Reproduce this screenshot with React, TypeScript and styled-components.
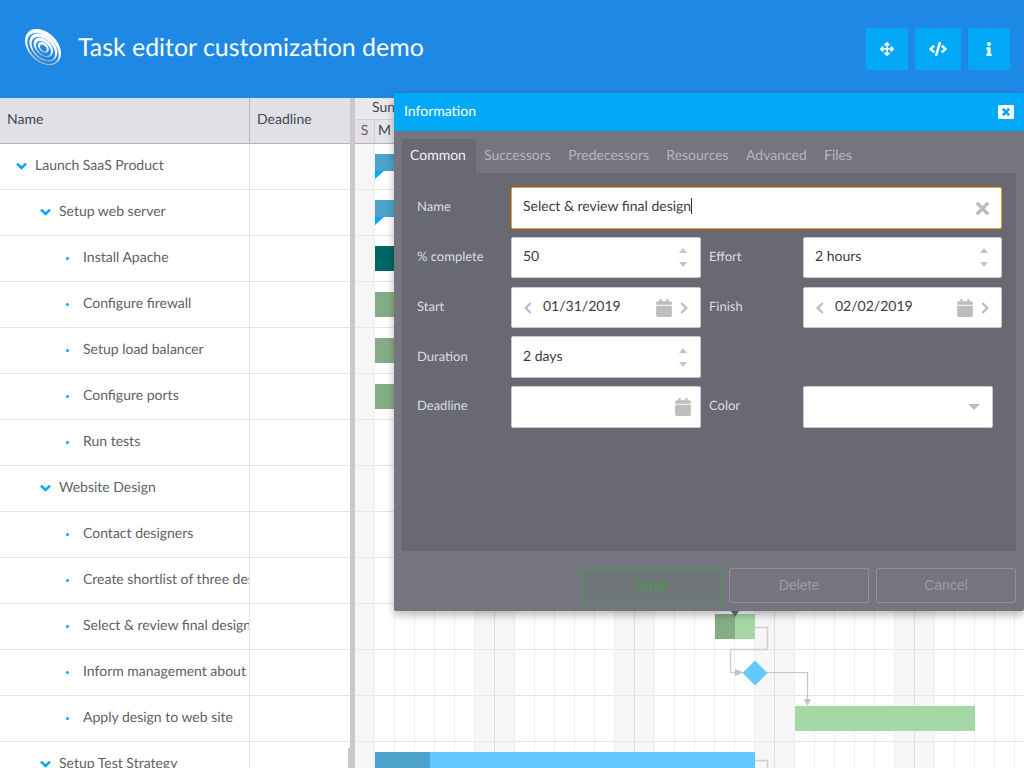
import React from "react";
import styled, { createGlobalStyle } from "styled-components";
import { FaArrowsAlt, FaCode, FaInfo, FaWindowClose, FaTimes, FaCalendar } from "react-icons/fa";

const Global = createGlobalStyle`
  html, body { margin: 0; padding: 0; width: 1024px; height: 768px; overflow: hidden; background: #fff; }
  * { box-sizing: border-box; }
  body { font-family: Lato, "Liberation Sans", sans-serif; text-rendering: geometricPrecision; }
`;

const Page = styled.div`position: relative; width: 1024px; height: 768px; overflow: hidden;`;
const Header = styled.header`
  height: 98px; background: #1e88e5; display: flex; align-items: center; padding: 0 14px 0 24px;
`;
const LogoSvg = styled.svg`flex: none; margin-bottom: 4px;`;
const Title = styled.h1`margin: 0 0 5px 16px; flex: 1; font-size: 24.9px; font-weight: 400; color: #fff;`;
const HeadBtn = styled.button<{ $w: number; $size?: number }>`
  width: ${p => p.$w}px; height: 42px; margin-left: 7px; border: 0; border-radius: 2px; background: #03a9f6; color: #fff;
  display: flex; align-items: center; justify-content: center; font-size: ${p => p.$size ?? 14}px; padding: 0;
`;
const Main = styled.div`display: flex; height: 670px;`;
const Tree = styled.div`width: 350px; flex: none;`;
const TreeHead = styled.div`
  display: grid; grid-template-columns: 250px 100px; height: 46px; background: #e0e1e6; border-bottom: 1px solid #b4b4ba;
  color: #45454d; font-size: 14px;
`;
const HeadCell = styled.div`
  display: flex; align-items: center; padding: 0 7px 5px;
  &:first-child { border-right: 1px solid #b4b4ba; }
`;
const Row = styled.div`display: grid; grid-template-columns: 250px 100px; height: 46px; border-bottom: 1px solid #e3e3e7;`;
const NameCell = styled.div<{ $level: number }>`
  border-right: 1px solid #e3e3e7; overflow: hidden; white-space: nowrap; display: flex; align-items: center;
  color: #606067; font-size: 14px; padding-bottom: 5px; padding-left: ${p => [16, 40, 66][p.$level]}px;
`;
const ChevronBox = styled.span`color: #03a9f6; width: 19px; flex: none; display: flex; align-items: center; padding-top: 3px;`;
const Dot = styled.span`width: 3px; height: 3px; margin: 5px 14px 0 0; border-radius: 50%; background: #03a9f6; flex: none;`;
const Splitter = styled.div`width: 5px; flex: none; background: #c8c8cf; position: relative;`;
const Thumb = styled.div`position: absolute; left: -2px; bottom: 0; width: 2px; height: 20px; background: #c8c8cf;`;
const Chart = styled.div`flex: 1; position: relative; overflow: hidden;`;
const TimeHead = styled.div`height: 46px; background: #e9e9ed; border-bottom: 1px solid #b4b4ba; color: #45454d; font-size: 14px;`;
const Week = styled.div`height: 22px; padding: 0 0 0 17px; border-bottom: 1px solid #d0d0d6; line-height: 18px;`;
const DayHeads = styled.div`display: flex; height: 23px;`;
const DayHead = styled.div<{ $off: boolean }>`
  width: 20px; text-align: center; line-height: 20px; border-right: 1px solid #cfcfd5;
  background: ${p => (p.$off ? "#e6dfe3" : "#e3e4e9")}; color: ${p => (p.$off ? "#66666c" : "#45454d")};
`;
const Canvas = styled.div`
  position: relative; height: 624px; display: flex;
  background: repeating-linear-gradient(to bottom, transparent 0 45px, #e3e3e7 45px 46px);
`;
const Day = styled.div<{ $off: boolean; $week: boolean }>`
  width: 20px; flex: none; border-right: 1px solid ${p => (p.$week ? "#dedee4" : "#f0f0f3")};
  background: ${p => (p.$off ? "rgba(238,238,238,.55)" : "transparent")};
`;
const Bar = styled.div<{ $l: number; $t: number; $w: number; $c: string; $h?: number }>`
  position: absolute; left: ${p => p.$l}px; top: ${p => p.$t}px; width: ${p => p.$w}px; height: ${p => p.$h ?? 25}px; background: ${p => p.$c};
  overflow: hidden;
`;
const Progress = styled.div<{ $w: number; $c: string }>`height: 100%; width: ${p => p.$w}px; background: ${p => p.$c};`;
const Notch = styled.div<{ $t: number }>`
  position: absolute; left: 20px; top: ${p => p.$t}px; width: 0; height: 0; border-top: 8px solid #03a9f6; border-right: 9px solid transparent;
`;
const Overlay = styled.svg`position: absolute; left: 0; top: 0; pointer-events: none;`;

const Modal = styled.div`
  position: absolute; left: 394px; top: 93px; width: 630px; height: 518px; background: #75757f; border-radius: 2px;
  box-shadow: 0 4px 8px rgba(0,0,0,.28); display: flex; flex-direction: column;
`;
const ModalTitle = styled.div`
  height: 38px; flex: none; background: #03a9f6; color: #fff; font-size: 14px; display: flex; align-items: center; justify-content: space-between;
  padding: 0 10px 3px 10px; border-radius: 2px 2px 0 0;
`;
const CloseIcon = styled.span`display: flex; font-size: 16px; color: #fff; padding-top: 3px;`;
const Tabs = styled.div`display: flex; height: 34px; margin: 8px 8px 0; flex: none;`;
const Tab = styled.div<{ $on?: boolean }>`
  padding: ${p => (p.$on ? "0 10px 0 8px" : "0 9.3px 0 8px")}; line-height: 31px; font-size: 14px; border-radius: 2px 2px 0 0;
  color: ${p => (p.$on ? "#f0f0f2" : "#b5b5bb")}; background: ${p => (p.$on ? "#696973" : "transparent")};
`;
const Panel = styled.div`
  height: 378px; margin: 0 8px; flex: none; background: #696973; padding: 14px 14px 0 15px;
  display: grid; grid-template-columns: 94px 190px 102px 199px; grid-template-rows: 50px 50px 49px 50px 50px; align-items: start;
`;
const Label = styled.div<{ $second?: boolean; $h?: number; $up?: boolean }>`
  height: ${p => p.$h ?? 41}px; display: flex; align-items: center; font-size: 13px; color: #dcdce0; padding-bottom: ${p => (p.$up ? 5 : 3)}px; padding-left: ${p => (p.$second ? 8 : 0)}px;
`;
const Field = styled.div<{ $h?: number; $focus?: boolean; $wide?: boolean; $short?: boolean }>`
  height: ${p => p.$h ?? 41}px; background: #fff; border-radius: 2px; border: 1px solid ${p => (p.$focus ? "#f59b1c" : "#c8c8ce")};
  display: flex; align-items: center; font-size: 14px; color: #3c3c42; padding: 0 11px;
  ${p => (p.$wide ? "grid-column: 2 / 5;" : "")}
  ${p => (p.$short ? "width: 190px;" : "")}
`;
const Value = styled.span<{ $low?: boolean }>`flex: 1; white-space: nowrap; margin-bottom: ${p => (p.$low ? 3 : 5)}px;`;
const Caret = styled.span`display: inline-block; width: 1px; height: 16px; background: #333; vertical-align: -3px;`;
const Gray = styled.span<{ $mr?: number; $ml?: number; $size?: number }>`
  display: flex; color: #bdbdbd; font-size: ${p => p.$size ?? 12}px; margin-right: ${p => p.$mr ?? 0}px; margin-left: ${p => p.$ml ?? 0}px; flex: none;
`;
const Spin = styled.span`display: flex; flex-direction: column; gap: 9px; margin-right: 2px;`;
const Tri = styled.i<{ $up?: boolean }>`
  display: block; width: 0; height: 0; border-left: 4px solid transparent; border-right: 4px solid transparent;
  ${p => (p.$up ? "border-bottom: 5px solid #c4c4c4;" : "border-top: 5px solid #c4c4c4;")}
`;
const Caretdown = styled.i`
  display: block; width: 0; height: 0; border-left: 6px solid transparent; border-right: 6px solid transparent; border-top: 6px solid #bdbdbd; margin-right: 1px;
`;
const Footer = styled.div`display: flex; justify-content: flex-end; gap: 7px; padding: 17px 8px 0; `;
const FootBtn = styled.button<{ $save?: boolean }>`
  width: 140px; height: 35px; border-radius: 2px; padding: 0 0 2px;
  font: 14px "Liberation Sans", sans-serif;
  background: ${p => (p.$save ? "#70757a" : "transparent")};
  border: 1px solid ${p => (p.$save ? "#43a047" : "#8f8f97")}; color: ${p => (p.$save ? "#43a047" : "#9c9ca3")};
`;

const tasks: [string, number][] = [
  ["Launch SaaS Product", 0], ["Setup web server", 1], ["Install Apache", 2], ["Configure firewall", 2],
  ["Setup load balancer", 2], ["Configure ports", 2], ["Run tests", 2], ["Website Design", 1], ["Contact designers", 2],
  ["Create shortlist of three designers", 2], ["Select & review final design", 2], ["Inform management about decision", 2],
  ["Apply design to web site", 2], ["Setup Test Strategy", 1],
];

const BG = "#1e88e5";
const Logo = () => (
  <LogoSvg width="38" height="38" viewBox="0 0 38 38">
    <defs>
      <linearGradient id="lg" x1="0.15" y1="0.05" x2="0.85" y2="0.95">
        <stop offset="0" stopColor="#fff" /><stop offset="0.6" stopColor="#f0f3f5" /><stop offset="1" stopColor="#a4a8ab" />
      </linearGradient>
    </defs>
    <g transform="rotate(45 19 19)">
      <ellipse cx="19" cy="19" rx="21" ry="14.500" fill="url(#lg)" />
      <ellipse cx="20" cy="20" rx="18.500" ry="12" fill={BG} />
      <ellipse cx="19.500" cy="19" rx="16.500" ry="11" fill="url(#lg)" />
      <ellipse cx="20.500" cy="20" rx="14" ry="8.800" fill={BG} />
      <ellipse cx="19.500" cy="19" rx="11.500" ry="7.600" fill="url(#lg)" />
      <ellipse cx="20.500" cy="19.800" rx="9" ry="5.600" fill={BG} />
      <ellipse cx="19.500" cy="19" rx="6.500" ry="4.300" fill="url(#lg)" />
      <ellipse cx="20" cy="19.500" rx="4" ry="2.500" fill={BG} />
    </g>
  </LogoSvg>
);

const DownChevron = () => (
  <svg width="11" height="8" viewBox="0 0 11 8"><path d="M1 1.600 5.500 6 10 1.600" fill="none" stroke="currentColor" strokeWidth="2.600" /></svg>
);
const Side = ({ right }: { right?: boolean }) => (
  <svg width="8" height="12" viewBox="0 0 8 12"><path d={right ? "M1.400 1 6.200 6 1.400 11" : "M6.600 1 1.800 6 6.600 11"} fill="none" stroke="currentColor" strokeWidth="2.400" /></svg>
);
const Cal = ({ mr }: { mr?: number }) => <Gray $size={18} $mr={mr}><FaCalendar /></Gray>;
const Spinner = () => <Spin><Tri $up /><Tri /></Spin>;
const DateValue = ({ v }: { v: string }) => (
  <>
    <Gray $ml={1} $mr={11}><Side /></Gray>
    <Value>{v}</Value>
    <Cal />
    <Gray $ml={7} $mr={1}><Side right /></Gray>
  </>
);

export default function App() {
  const days = Array.from({ length: 34 }, (_, i) => i);
  const off = (i: number) => i % 7 === 0 || i % 7 === 6;
  return (
    <Page>
      <Global />
      <Header>
        <Logo />
        <Title>Task editor customization demo</Title>
        <HeadBtn $w={42}><FaArrowsAlt /></HeadBtn>
        <HeadBtn $w={46} $size={18}><FaCode /></HeadBtn>
        <HeadBtn $w={42}><FaInfo /></HeadBtn>
      </Header>
      <Main>
        <Tree>
          <TreeHead><HeadCell>Name</HeadCell><HeadCell>Deadline</HeadCell></TreeHead>
          {tasks.map(([t, l]) => (
            <Row key={t}>
              <NameCell $level={l}>
                {l < 2 ? <ChevronBox><DownChevron /></ChevronBox> : <Dot />}
                {t}
              </NameCell>
              <div />
            </Row>
          ))}
        </Tree>
        <Splitter><Thumb /></Splitter>
        <Chart>
          <TimeHead>
            <Week>Sun</Week>
            <DayHeads>
              <DayHead $off>S</DayHead><DayHead $off={false}>M</DayHead><DayHead $off={false}>T</DayHead>
            </DayHeads>
          </TimeHead>
          <Canvas>
            {days.map(i => <Day key={i} $off={off(i)} $week={i % 7 === 6} />)}
            <Bar $l={20} $t={10} $w={380} $h={17} $c="#62c9ff"><Progress $w={60} $c="#4da3cc" /></Bar>
            <Notch $t={27} />
            <Bar $l={20} $t={56} $w={380} $h={17} $c="#62c9ff"><Progress $w={60} $c="#4da3cc" /></Bar>
            <Notch $t={73} />
            <Bar $l={20} $t={102} $w={60} $c="#006666" />
            <Bar $l={20} $t={148} $w={60} $c="#85ad85" />
            <Bar $l={20} $t={194} $w={60} $c="#85ad85" />
            <Bar $l={20} $t={240} $w={60} $c="#85ad85" />
            <Bar $l={360} $t={470} $w={40} $c="#a5d8a5"><Progress $w={20} $c="#85ad85" /></Bar>
            <Bar $l={440} $t={562} $w={180} $c="#a5d8a5" />
            <Bar $l={20} $t={608} $w={380} $c="#62c9ff"><Progress $w={55} $c="#4da3cc" /></Bar>
            <Overlay width="669" height="624" viewBox="0 0 669 624">
              <path d="M374 464h12l-6 9z" fill="#70707a" />
              <g fill="none">
                <path d="M400 483.500H412.500V505.500H375.500V528.500H382" stroke="#d0d0d0" strokeWidth="1.500" />
                <path d="M412 528.500H452.500V556" stroke="#c4c4c4" strokeWidth="1.200" />
                <path d="M400 616.500H412.500V624" stroke="#d0d0d0" strokeWidth="1.500" />
              </g>
              <path d="M380 525l9 3.500-9 3.500z M449 555h7l-3.500 7z" fill="#c4c4c4" />
              <path d="M400 516.500l12.500 12.500-12.500 12.500-12.500-12.500z" fill="#62c9ff" />
            </Overlay>
          </Canvas>
        </Chart>
      </Main>
      <Modal>
        <ModalTitle>
          Information
          <CloseIcon><FaWindowClose /></CloseIcon>
        </ModalTitle>
        <Tabs>
          <Tab $on>Common</Tab><Tab>Successors</Tab><Tab>Predecessors</Tab><Tab>Resources</Tab><Tab>Advanced</Tab><Tab>Files</Tab>
        </Tabs>
        <Panel>
          <Label $h={42} $up>Name</Label>
          <Field $h={42} $focus $wide>
            <Value>Select &amp; review final design<Caret /></Value>
            <Gray $size={19} $mr={-2}><FaTimes /></Gray>
          </Field>
          <Label>% complete</Label>
          <Field><Value>50</Value><Spinner /></Field>
          <Label $second>Effort</Label>
          <Field><Value>2 hours</Value><Spinner /></Field>
          <Label>Start</Label>
          <Field><DateValue v="01/31/2019" /></Field>
          <Label $second>Finish</Label>
          <Field><DateValue v="02/02/2019" /></Field>
          <Label $h={42}>Duration</Label>
          <Field $h={42}><Value $low>2 days</Value><Spinner /></Field>
          <div /><div />
          <Label $h={42} $up>Deadline</Label>
          <Field $h={42}><Value /><Cal mr={-3} /></Field>
          <Label $second $h={42} $up>Color</Label>
          <Field $h={42} $short><Value /><Caretdown /></Field>
        </Panel>
        <Footer>
          <FootBtn $save>Save</FootBtn><FootBtn>Delete</FootBtn><FootBtn>Cancel</FootBtn>
        </Footer>
      </Modal>
    </Page>
  );
}
